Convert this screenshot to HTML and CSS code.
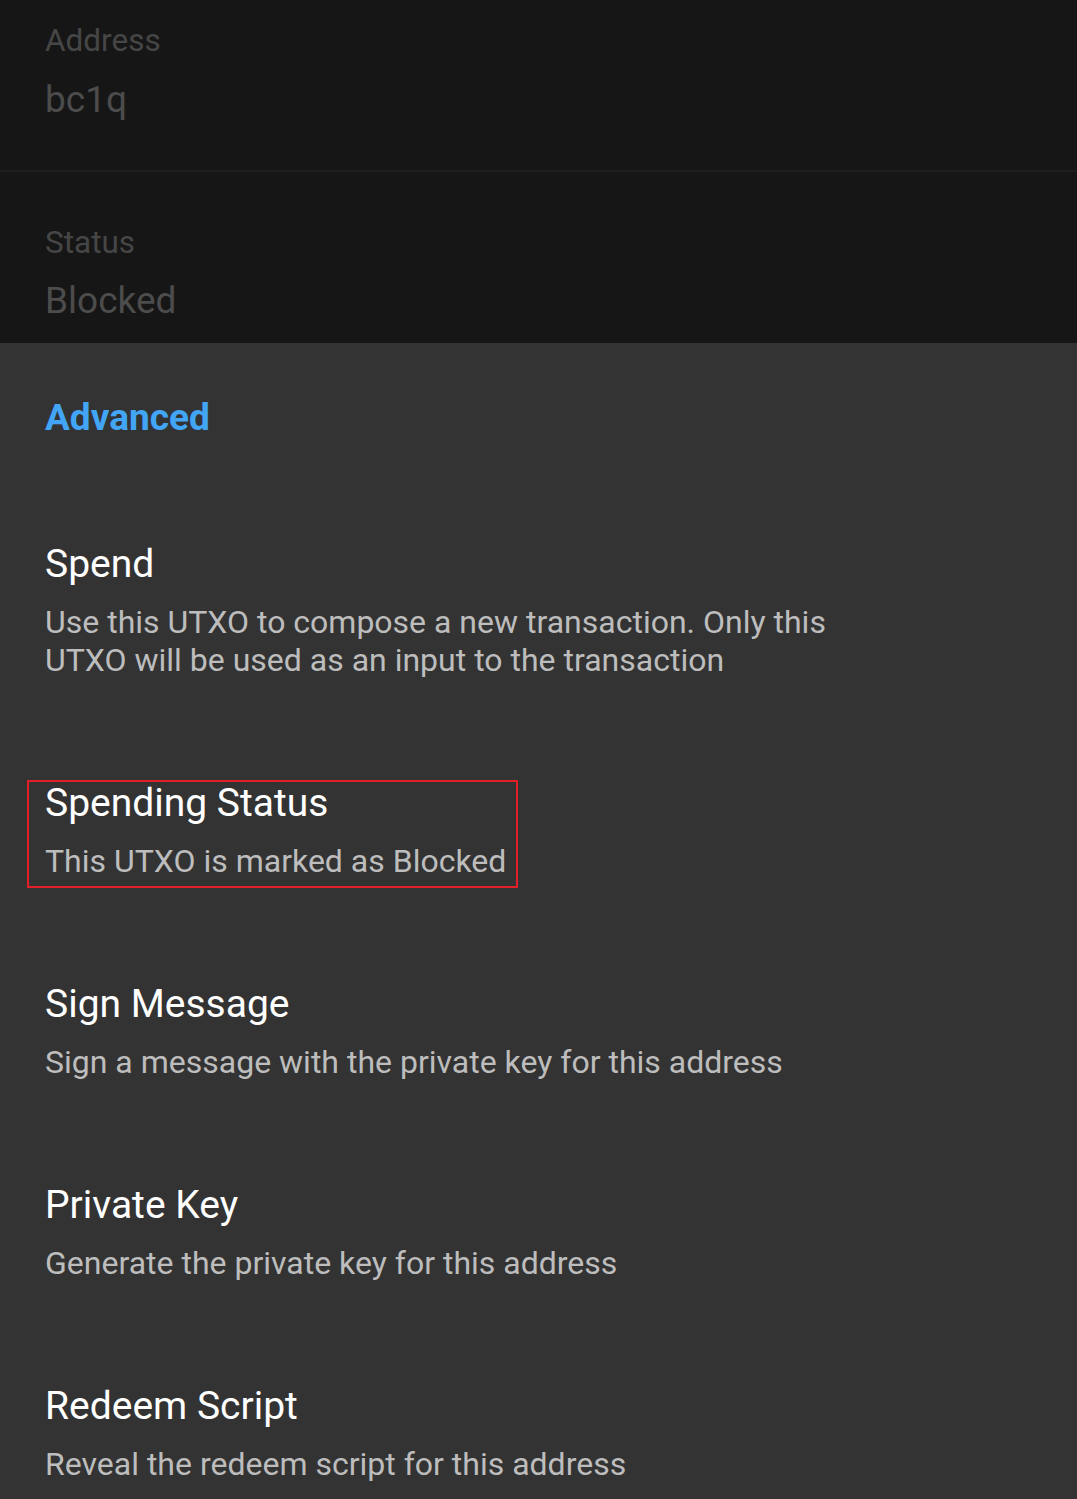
FILE: index.html
```html
<!DOCTYPE html>
<html>
<head>
<meta charset="utf-8">
<link rel="stylesheet" href="styles.css">
</head>
<body>
<div class="page">
  <section class="info first">
    <div class="info-label">Address</div>
    <div class="info-value">bc1q</div>
  </section>
  <div class="divider"></div>
  <section class="info second">
    <div class="info-label">Status</div>
    <div class="info-value">Blocked</div>
  </section>
  <section class="advanced">
    <h2 class="adv-title">Advanced</h2>
    <div class="item">
      <div class="item-title">Spend</div>
      <div class="item-desc">Use this UTXO to compose a new transaction. Only this<br>UTXO will be used as an input to the transaction</div>
    </div>
    <div class="item highlighted">
      <div class="item-title">Spending Status</div>
      <div class="item-desc">This UTXO is marked as Blocked</div>
      <div class="highlight-box"></div>
    </div>
    <div class="item">
      <div class="item-title">Sign Message</div>
      <div class="item-desc">Sign a message with the private key for this address</div>
    </div>
    <div class="item">
      <div class="item-title">Private Key</div>
      <div class="item-desc">Generate the private key for this address</div>
    </div>
    <div class="item">
      <div class="item-title">Redeem Script</div>
      <div class="item-desc">Reveal the redeem script for this address</div>
    </div>
  </section>
</div>
</body>
</html>
```
FILE: styles.css
```css
html, body {
  margin: 0;
  padding: 0;
  background: #333333;
}
body {
  font-family: Roboto, "Noto Sans", sans-serif;
  width: 1077px;
  height: 1499px;
  overflow: hidden;
}
.page {
  display: flex;
  flex-direction: column;
}
.info {
  background: #161616;
  padding-left: 45px;
  display: flex;
  flex-direction: column;
}
.info.first {
  padding-top: 23px;
  padding-bottom: 48px;
}
.info.first .info-value {
  margin-top: 19px;
}
.info.second {
  padding-top: 53px;
  padding-bottom: 20px;
}
.info.second .info-value {
  margin-top: 18px;
}
.divider {
  height: 2px;
  background: #1e1e1e;
}
.info-label {
  font-size: 31.5px;
  line-height: 36px;
  color: #464646;
}
.info-value {
  font-size: 37px;
  line-height: 44px;
  color: #4c4c4c;
}
.advanced {
  background: #333333;
  padding: 0 45px;
  display: flex;
  flex-direction: column;
}
.adv-title {
  margin: 0;
  padding-top: 55px;
  padding-bottom: 54px;
  font-size: 37px;
  line-height: 40px;
  font-weight: 700;
  color: #42a5f5;
}
.item {
  position: relative;
  padding: 53px 0 52px;
}
.item-title {
  font-size: 39px;
  line-height: 38px;
  color: #ffffff;
}
.item-desc {
  margin-top: 20px;
  font-size: 32px;
  line-height: 38px;
  color: #bdbdbd;
}
.highlight-box {
  position: absolute;
  left: -18px;
  top: 49px;
  width: 487px;
  height: 104px;
  border: 2px solid #e3202a;
}
```
